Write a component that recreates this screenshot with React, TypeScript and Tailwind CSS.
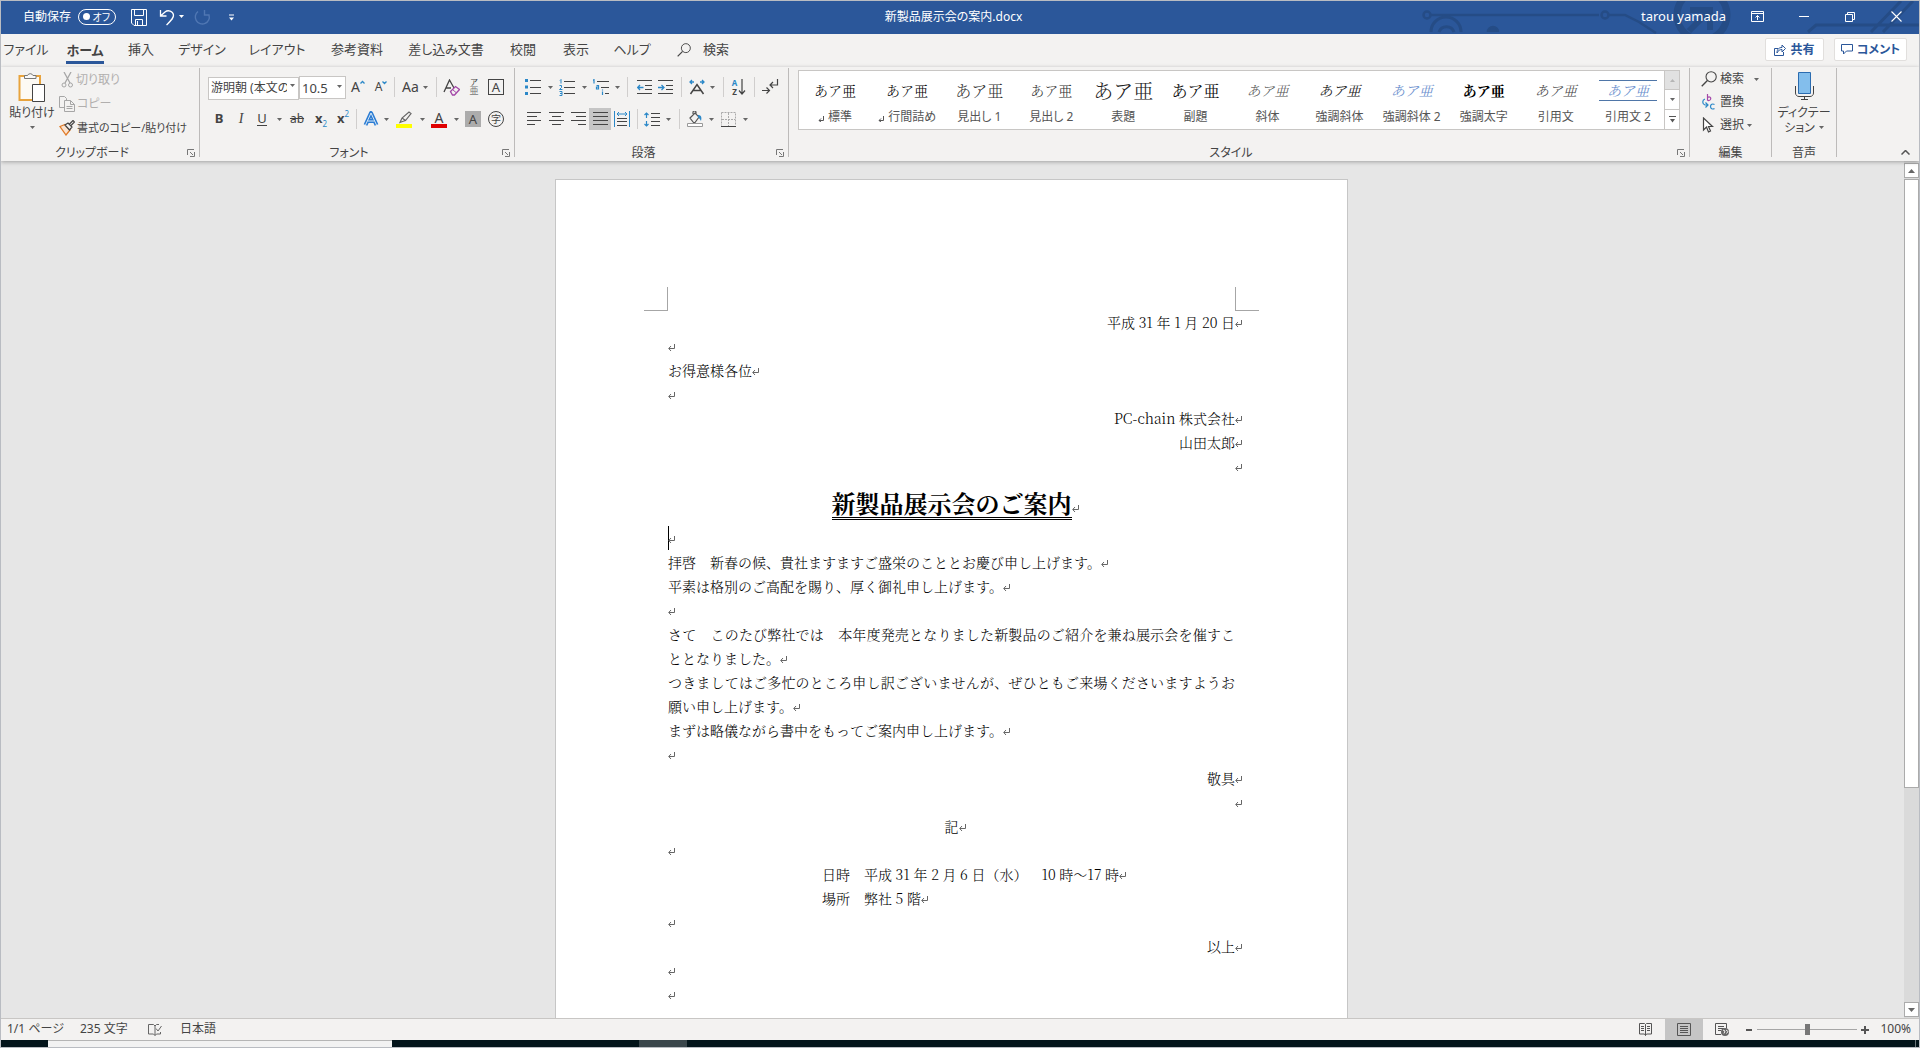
import React from "react";

const INK = "#444444";
const BLUE = "#2b88c8";

type Kids = { children?: React.ReactNode };

function Svg({ w, h, children, className = "" }: { w: number; h: number; className?: string } & Kids) {
  return (
    <svg width={w} height={h} viewBox={`0 0 ${w} ${h}`} fill="none" className={`shrink-0 ${className}`} aria-hidden="true">
      {children}
    </svg>
  );
}

function Tri({ color = "#666666" }: { color?: string }) {
  return (
    <Svg w={5} h={3}>
      <path d="M0 0h5L2.500 3z" fill={color} />
    </Svg>
  );
}

function Tool({ w, label, on = false, children }: { w: string; label: string; on?: boolean } & Kids) {
  return (
    <button
      type="button"
      aria-label={label}
      title={label}
      className={`flex h-[22px] shrink-0 items-center justify-center ${w} ${on ? "bg-[#c5c5c5]" : ""}`}
    >
      {children}
    </button>
  );
}

function Caret({ w, label }: { w: string; label: string }) {
  return (
    <button type="button" aria-label={label} className={`flex h-[22px] shrink-0 items-center justify-center ${w}`}>
      <Tri />
    </button>
  );
}

function Sep({ w }: { w: string }) {
  return (
    <div className={`flex shrink-0 justify-center ${w}`}>
      <div className="h-5 w-px bg-[#d0cecd]" />
    </div>
  );
}

function Group({ label, w, launcher = true, children }: { label: string; w: string; launcher?: boolean } & Kids) {
  return (
    <section aria-label={label} className={`flex flex-col ${w}`}>
      <div className="h-[78px]">{children}</div>
      <div className="flex h-4 items-center">
        <h2 className={`flex-1 text-center text-xs leading-4 text-[#444444] ${launcher ? "pr-1" : ""}`}>{label}</h2>
        {launcher && (
          <button type="button" aria-label={`${label}の設定`} className="flex w-3 justify-start">
            <Svg w={8} h={8}>
              <path d="M.5 6V.5H7M3 3l3 3M7.500 3v4.500H3" stroke="#777777" />
            </Svg>
          </button>
        )}
      </div>
    </section>
  );
}

function Divider() {
  return <div className="mt-px h-[89px] w-px shrink-0 bg-[#bdbbba]" />;
}

/* ---------- title bar ---------- */

function Circuit() {
  return (
    <svg
      className="pointer-events-none absolute right-0 top-0"
      width={498}
      height={33}
      viewBox="0 0 498 33"
      fill="none"
      stroke="#254c86"
      strokeWidth={2.500}
      aria-hidden="true"
    >
      <circle cx="6" cy="14" r="3.500" />
      <path d="M10 14h168" />
      <circle cx="184" cy="14" r="3.500" />
      <path d="M188 14h16l14 7 17 11" />
      <path d="M10 31a15 15 0 0 1 30 0M18 31a8 8 0 0 1 15 0" strokeWidth="3" />
      <path d="M67 31a5 5 0 0 1 10 0" fill="#254c86" />
      <circle cx="281" cy="14" r="25" strokeWidth="7" />
      <path d="M268 30l18-18M269 9h20v20" strokeWidth="6" />
      <path d="M387 31l8-7h103M450 31L480 0M462 31L492 0" strokeWidth="3" />
    </svg>
  );
}

function TitleBar() {
  return (
    <header className="relative grid h-[33px] shrink-0 grid-cols-[1fr_auto_1fr] items-center overflow-hidden bg-[#2b579a] pb-0.5 text-white">
      <Circuit />
      <div className="relative flex items-center pl-[22px]">
        <span className="mr-[7px] text-xs">自動保存</span>
        <button
          type="button"
          role="switch"
          aria-checked="false"
          aria-label="自動保存"
          className="flex h-4 w-[38px] items-center justify-between rounded-full border border-white pl-1 pr-[5px]"
        >
          <span className="size-[7px] rounded-full bg-white" />
          <span className="text-[10px] leading-3">オフ</span>
        </button>
        <button type="button" aria-label="上書き保存" className="ml-[15px] mt-0.5">
          <Svg w={16} h={17}>
            <path d="M.5 .5h15v16H3L.500 14zM3.500 .5v6h9v-6M4.500 16.500v-6h7v6M6.500 12v4" stroke="white" />
          </Svg>
        </button>
        <button type="button" aria-label="元に戻す" className="ml-3 mt-0.5">
          <Svg w={16} h={17}>
            <path d="M1.500 1v6h6M1.500 7L6 3c3-2.500 8-1 8.500 3 .2 3-2 5-7 10" stroke="white" strokeWidth="1.300" />
          </Svg>
        </button>
        <button type="button" aria-label="元に戻すの履歴" className="ml-1 flex h-4 items-center">
          <Tri color="white" />
        </button>
        <button type="button" aria-label="やり直し" disabled className="ml-[10px] mt-0.5">
          <Svg w={17} h={17}>
            <path d="M10.500 1v5h5M15 6A7 7 0 1 1 4 2.500" stroke="#5077b3" strokeWidth="1.400" />
          </Svg>
        </button>
        <button type="button" aria-label="クイック アクセス ツール バーのユーザー設定" className="ml-[17px] mt-0.5">
          <Svg w={7} h={7}>
            <path d="M1 1h5" stroke="white" />
            <path d="M1 3.500h5L3.500 6.500z" fill="white" />
          </Svg>
        </button>
      </div>
      <h1 className="relative mr-[13px] text-xs">新製品展示会の案内.docx</h1>
      <div className="relative flex items-center justify-end">
        <span className="mr-2 text-[13px]">tarou yamada</span>
        <button type="button" aria-label="リボンの表示オプション" className="flex h-[31px] w-[47px] items-center justify-center">
          <Svg w={13} h={11}>
            <path d="M.5 .5h12v10H.5zM.5 2.500h12M6.500 9V4.500M4.500 6.500l2-2 2 2" stroke="white" />
          </Svg>
        </button>
        <button type="button" aria-label="最小化" className="flex h-[31px] w-[46px] items-center justify-center">
          <Svg w={10} h={1}>
            <path d="M0 .5h10" stroke="white" />
          </Svg>
        </button>
        <button type="button" aria-label="元に戻す (縮小)" className="flex h-[31px] w-[46px] items-center justify-center">
          <Svg w={10} h={10}>
            <path d="M.5 2.500h7v7h-7zM2.500 2.500v-2h7v7h-2" stroke="white" />
          </Svg>
        </button>
        <button type="button" aria-label="閉じる" className="flex h-[31px] w-[46px] items-center justify-center">
          <Svg w={11} h={11}>
            <path d="M.5 .5l10 10M10.500 .5l-10 10" stroke="white" strokeWidth="1.100" />
          </Svg>
        </button>
      </div>
    </header>
  );
}

/* ---------- tabs ---------- */

const TABS = [
  { name: "ファイル", w: "w-[50px]" },
  { name: "ホーム", w: "w-[68px]", on: true },
  { name: "挿入", w: "w-11" },
  { name: "デザイン", w: "w-[78px]" },
  { name: "レイアウト", w: "w-[72px]" },
  { name: "参考資料", w: "w-[88px]" },
  { name: "差し込み文書", w: "w-[90px]" },
  { name: "校閲", w: "w-16" },
  { name: "表示", w: "w-[42px]" },
  { name: "ヘルプ", w: "w-[70px]" },
];

function Magnifier({ size }: { size: number }) {
  return (
    <svg width={size} height={size} viewBox="0 0 15 15" fill="none" className="shrink-0" aria-hidden="true">
      <circle cx="9.500" cy="5.500" r="4.800" stroke={INK} />
      <path d="M6 9L.700 14.300" stroke={INK} strokeWidth="1.300" />
    </svg>
  );
}

function TabRow() {
  return (
    <nav aria-label="リボン タブ" className="flex h-[33px] shrink-0 items-center pb-0.5 text-[13px] text-[#444444]">
      {TABS.map((t) => (
        <button key={t.name} type="button" className={`flex shrink-0 justify-center whitespace-nowrap ${t.w}`}>
          {t.on ? (
            <span className="mt-1 border-b-3 border-[#2b579a] pb-px font-bold leading-5">{t.name}</span>
          ) : (
            t.name
          )}
        </button>
      ))}
      <button type="button" className="ml-[10px] flex items-center gap-3 whitespace-nowrap">
        <Magnifier size={14} />
        検索
      </button>
      <div className="ml-auto flex gap-[10px] pr-3 font-bold text-[#2b579a]">
        <button type="button" className="flex h-[23px] w-[59px] items-center justify-center gap-1 rounded-xs border border-[#e1dfdd] bg-white text-xs">
          <Svg w={12} h={12}>
            <path d="M4 4.500H.5v7h9V8M3 9c0-4 2-5.500 5-5.500V1l3.500 3.500L8 8V5.500C6 5.500 4 6.500 3 9z" stroke="#2b579a" />
          </Svg>
          共有
        </button>
        <button type="button" className="flex h-[23px] w-[73px] items-center justify-center gap-1 rounded-xs border border-[#e1dfdd] bg-white text-xs">
          <Svg w={12} h={11}>
            <path d="M.5 .5h11v6.500H5.500L2.500 10V7h-2z" stroke="#2b579a" />
          </Svg>
          コメント
        </button>
      </div>
    </nav>
  );
}

/* ---------- ribbon ---------- */

function Clipboard() {
  return (
    <Group label="クリップボード" w="w-[198px]">
      <div className="flex pt-[5px] text-xs leading-4 text-[#444444]">
        <button type="button" className="flex w-[62px] shrink-0 flex-col items-center">
          <Svg w={28} h={30}>
            <path d="M4 4h18v24H1.500V4z" fill="#fdfaf4" stroke="#e8a33d" strokeWidth="2" />
            <path d="M6.500 6.500v-3h3a3 3 0 0 1 5.500 0h3v3z" fill="#f8f8f8" stroke="#777777" />
            <path d="M14.500 12.500h12v17h-12z" fill="white" stroke="#444444" />
          </Svg>
          <span className="mt-[3px] whitespace-nowrap">貼り付け</span>
          <span className="mt-[5px]">
            <Tri />
          </span>
        </button>
        <div className="flex flex-col gap-2 whitespace-nowrap">
          <button type="button" disabled className="-ml-1 flex h-4 items-center gap-[3px] text-[#b1afae]">
            <Svg w={14} h={16}>
              <path d="M5 0l6 11M12 0L6 11" stroke="#a6a6a6" strokeWidth="1.300" />
              <circle cx="5" cy="13" r="2" stroke="#a6a6a6" />
              <circle cx="11.500" cy="13" r="2" stroke="#a6a6a6" />
            </Svg>
            切り取り
          </button>
          <button type="button" disabled className="-ml-1 flex h-4 items-center gap-[2px] text-[#b1afae]">
            <Svg w={16} h={16}>
              <path d="M.5 .5h5l2 2v9h-7z" stroke="#a6a6a6" />
              <path d="M5.500 4.500h6l4 4v7h-10z" fill="#f3f2f1" stroke="#a6a6a6" />
              <path d="M11.500 4.500v4h4M7.500 10.500h6M7.500 12.500h6" stroke="#a6a6a6" />
            </Svg>
            コピー
          </button>
          <button type="button" className="-ml-1 flex h-4 items-center gap-[2px] text-[11px]">
            <Svg w={16} h={16}>
              <path d="M1 6.500l5-2 5 5.500-4 5z" fill="#fbe3cf" stroke="#e07b28" strokeWidth="1.300" />
              <path d="M6 5l3-2 4 4-2.500 3zM10.500 4l3.500-3.500 1.500 1.500L12 5.500" fill="#f3f2f1" stroke="#444444" strokeWidth="1.200" />
            </Svg>
            書式のコピー/貼り付け
          </button>
        </div>
      </div>
    </Group>
  );
}

function FontPicker({ label, value, w, look }: { label: string; value: string; w: string; look: string }) {
  return (
    <div className={`relative shrink-0 ${w}`}>
      <select
        aria-label={label}
        defaultValue={value}
        className={`h-[23px] w-full appearance-none overflow-hidden border border-[#c8c6c4] bg-white pl-[2px] leading-5 text-[#444444] ${look}`}
      >
        <option>{value}</option>
      </select>
      <span className="pointer-events-none absolute right-1 top-[10px]">
        <Tri />
      </span>
    </div>
  );
}

function FontGroup() {
  return (
    <Group label="フォント" w="w-[314px]">
      <div className="pl-2 pt-1 text-[#444444]">
        <div className="flex h-8 items-center">
          <FontPicker label="フォント" value="游明朝 (本文の" w="w-[91px]" look="pr-[11px] text-xs" />
          <FontPicker label="フォント サイズ" value="10.5" w="w-[47px]" look="pr-[11px] text-[13px]" />
          <Tool w="w-6" label="フォント サイズの拡大">
            <span className="text-sm">A</span>
            <Svg w={5} h={14}>
              <path d="M.5 3.500l2-2 2 2" stroke={BLUE} strokeWidth="1.300" />
            </Svg>
          </Tool>
          <Tool w="w-[22px]" label="フォント サイズの縮小">
            <span className="text-xs">A</span>
            <Svg w={5} h={14}>
              <path d="M.5 1.500l2 2 2-2" stroke={BLUE} strokeWidth="1.300" />
            </Svg>
          </Tool>
          <Sep w="w-1" />
          <Tool w="w-[38px]" label="文字種の変換">
            <span className="mr-1 text-sm">Aa</span>
            <Tri />
          </Tool>
          <Sep w="w-1" />
          <Tool w="w-[26px]" label="すべての書式をクリア">
            <Svg w={17} h={17}>
              <path d="M1 13L6.500 1 11 9M3 9h5" stroke={INK} strokeWidth="1.300" />
              <path d="M7.500 12.500l5-5 4 3-5 5.500h-2z" fill="#f3f2f1" stroke="#a347a8" strokeWidth="1.300" />
              <path d="M9.500 10.500l3.500 3" stroke="#a347a8" />
            </Svg>
          </Tool>
          <Tool w="w-5" label="ルビ">
            <span className="flex flex-col items-center">
              <span className="text-[8px] leading-[8px]">ア</span>
              <span className="text-[9px] leading-[10px] text-[#777777]">亜</span>
            </span>
          </Tool>
          <Tool w="w-6" label="囲み線">
            <span className="flex size-4 items-center justify-center border border-[#444444] text-[13px] leading-4">A</span>
          </Tool>
        </div>
        <div className="flex h-8 items-center">
          <Tool w="w-[22px]" label="太字">
            <span className="text-[13px] font-bold">B</span>
          </Tool>
          <Tool w="w-[22px]" label="斜体">
            <span className="font-['Liberation_Serif'] text-sm italic">I</span>
          </Tool>
          <Tool w="w-5" label="下線">
            <span className="border-b border-[#444444] text-[13px] leading-[13px]">U</span>
          </Tool>
          <Caret w="w-[14px]" label="下線の種類" />
          <Tool w="w-[22px]" label="取り消し線">
            <span className="text-xs line-through">ab</span>
          </Tool>
          <Tool w="w-[26px]" label="下付き">
            <span className="text-[13px] font-bold">x</span>
            <span className="mt-[10px] text-[8px] leading-[8px] text-[#2b88c8]">2</span>
          </Tool>
          <Tool w="w-[18px]" label="上付き">
            <span className="text-[13px] font-bold">x</span>
            <span className="mb-[10px] text-[8px] leading-[8px] text-[#2b88c8]">2</span>
          </Tool>
          <Sep w="w-2" />
          <Tool w="w-[22px]" label="文字の効果と体裁">
            <Svg w={16} h={16}>
              <path d="M2.500 14L8 2l5.500 12M4.500 10h7" stroke="#2b7cd3" strokeWidth="4" strokeLinejoin="round" />
              <path d="M2.500 14L8 2l5.500 12M4.500 10h7" stroke="#d6e8f7" strokeWidth="1" />
            </Svg>
          </Tool>
          <Caret w="w-2" label="文字の効果" />
          <Tool w="w-7" label="蛍光ペンの色">
            <Svg w={16} h={17}>
              <path d="M0 13h16v4H0z" fill="#ffff00" />
              <path d="M4 11.500l2-4.500 7-6 2 1.500-5.500 7-3 1zM6 7l3.500 2.500" stroke="#666666" strokeWidth="1.200" />
            </Svg>
          </Tool>
          <Caret w="w-2" label="蛍光ペンの色の一覧" />
          <Tool w="w-[26px]" label="フォントの色">
            <span className="flex flex-col items-center">
              <span className="text-sm leading-[13px]">A</span>
              <span className="h-1 w-4 bg-[#e00000]" />
            </span>
          </Tool>
          <Caret w="w-2" label="フォントの色の一覧" />
          <Tool w="w-[26px]" label="文字の網かけ">
            <span className="flex size-4 items-center justify-center bg-[#acacac] text-[13px] leading-4">A</span>
          </Tool>
          <Tool w="w-5" label="囲い文字">
            <span className="flex size-4 items-center justify-center rounded-full border border-[#444444] text-[10px] leading-3">字</span>
          </Tool>
        </div>
      </div>
    </Group>
  );
}

function Lines({ d }: { d: string }) {
  return (
    <Svg w={15} h={14}>
      <path d={d} stroke={INK} />
    </Svg>
  );
}

function ParagraphGroup() {
  return (
    <Group label="段落" w="w-[273px]">
      <div className="pt-1">
        <div className="flex h-8 items-center pl-[6px]">
          <Tool w="w-6" label="箇条書き">
            <Svg w={16} h={16}>
              <path d="M0 0h3v3H0zM0 6.500h3v3H0zM0 13h3v3H0z" fill={BLUE} />
              <path d="M5 1.500h11M5 8.500h11M5 14.500h11" stroke={INK} />
            </Svg>
          </Tool>
          <Caret w="w-[10px]" label="箇条書きの種類" />
          <Tool w="w-6" label="段落番号">
            <Svg w={16} h={17}>
              <path d="M1 1.500l1-1v4M.5 6.500h2v2l-2 2h3M.5 12.500h2.500v4H.500M1 14.500h2" stroke={BLUE} />
              <path d="M5 2.500h11M5 8.500h11M5 14.500h11" stroke={INK} />
            </Svg>
          </Tool>
          <Caret w="w-[10px]" label="段落番号の種類" />
          <Tool w="w-6" label="アウトライン">
            <Svg w={16} h={17}>
              <path d="M0 1.500l1-1v4M3.500 6.500h2v3.500h-2v-2h2M9.500 12.500V16M9.500 10.500v1" stroke={BLUE} strokeWidth="1.200" />
              <path d="M4 2.500h12M8 8.500h8M12 14.500h4" stroke={INK} />
            </Svg>
          </Tool>
          <Caret w="w-2" label="アウトラインの種類" />
          <Sep w="w-[13px]" />
          <Tool w="w-5" label="インデントを減らす">
            <Svg w={15} h={14}>
              <path d="M0 .5h15M8 5.500h7M8 9.500h7M0 13.500h15" stroke={INK} />
              <path d="M6.500 7.500H1M3 5L.700 7.500 3 10" stroke={BLUE} strokeWidth="1.300" />
            </Svg>
          </Tool>
          <Tool w="w-[23px]" label="インデントを増やす">
            <Svg w={15} h={14}>
              <path d="M0 .5h15M8 5.500h7M8 9.500h7M0 13.500h15" stroke={INK} />
              <path d="M0 7.500h5.500M3.500 5l2.500 2.500L3.500 10" stroke={BLUE} strokeWidth="1.300" />
            </Svg>
          </Tool>
          <Sep w="w-2" />
          <Tool w="w-6" label="拡張書式">
            <Svg w={16} h={16}>
              <path d="M1.500 15L8 5.500 14.500 15M4 11.500h8" stroke={INK} strokeWidth="1.500" />
              <path d="M5 3H1M3 1L1 3l2 2M11 3h4M13 1l2 2-2 2" stroke={BLUE} strokeWidth="1.300" />
            </Svg>
          </Tool>
          <Caret w="w-[6px]" label="拡張書式の一覧" />
          <Sep w="w-4" />
          <Tool w="w-4" label="並べ替え">
            <span className="flex flex-col text-[8px] font-bold leading-[9px]">
              <span className="text-[#2b88c8]">A</span>
              <span className="text-[#444444]">Z</span>
            </span>
            <Svg w={8} h={16} className="ml-px">
              <path d="M4 0v15M1 11.500l3 3.500 3-3.500" stroke={INK} strokeWidth="1.200" />
            </Svg>
          </Tool>
          <Sep w="w-[14px]" />
          <Tool w="w-[18px]" label="編集記号の表示/非表示">
            <Svg w={17} h={16}>
              <path d="M15.500 0v6H8M11 3L8 6l3 3M0 11.500h7M4.500 8.500l3 3-3 3" stroke={INK} strokeWidth="1.200" />
            </Svg>
          </Tool>
        </div>
        <div className="flex h-8 items-center pl-2">
          <Tool w="w-[22px]" label="左揃え">
            <Lines d="M0 .5h14M0 4.500h10M0 8.500h14M0 12.500h8" />
          </Tool>
          <Tool w="w-[22px]" label="中央揃え">
            <Lines d="M0 .5h15M3 4.500h9M0 8.500h15M3 12.500h9" />
          </Tool>
          <Tool w="w-[22px]" label="右揃え">
            <Lines d="M0 .5h15M5 4.500h10M0 8.500h15M7 12.500h8" />
          </Tool>
          <Tool w="w-[22px]" label="両端揃え" on>
            <Lines d="M0 .5h15M0 4.500h15M0 8.500h15M0 12.500h15" />
          </Tool>
          <Tool w="w-[22px]" label="均等割り付け">
            <Svg w={16} h={16}>
              <path d="M.5 0v16M15.500 0v16M3 3h10M5 1L3 3l2 2M11 1l2 2-2 2" stroke={BLUE} />
              <path d="M3 7.500h10M3 10.500h10M3 14.500h10" stroke={INK} />
            </Svg>
          </Tool>
          <Sep w="w-2" />
          <Tool w="w-[22px]" label="行と段落の間隔">
            <Svg w={16} h={15}>
              <path d="M2.500 1v5M.500 3l2-2 2 2M2.500 9v5M.500 12l2 2 2-2" stroke={BLUE} strokeWidth="1.200" />
              <path d="M7 1.500h9M7 5.500h9M7 9.500h9M7 13.500h9" stroke={INK} />
            </Svg>
          </Tool>
          <Caret w="w-[10px]" label="間隔の一覧" />
          <Sep w="w-3" />
          <Tool w="w-5" label="塗りつぶし">
            <Svg w={16} h={16}>
              <path d="M3 7l5-5 4 4-4 5.500H6.500zM6 3V1.500a1.500 1.500 0 0 1 3 0V4" stroke="#555555" strokeWidth="1.200" />
              <path d="M11 4c3 0 4 2 3 6-1-2-2-3-3-4z" fill={BLUE} />
              <path d="M.5 12.500h15v3H.5z" fill="white" stroke="#999999" />
            </Svg>
          </Tool>
          <Caret w="w-3" label="塗りつぶしの色" />
          <Tool w="w-[22px]" label="罫線">
            <Svg w={15} h={15}>
              <path d="M.5 .5h14v13M.5 .5v13M7.500 1v13M1 7.500h13" stroke="#aaaaaa" strokeDasharray="2 1" />
              <path d="M0 14.500h15" stroke={INK} />
            </Svg>
          </Tool>
          <Caret w="w-3" label="罫線の種類" />
        </div>
      </div>
    </Group>
  );
}

const STYLES = [
  { name: "標準", mark: true, look: "font-light text-sm text-black" },
  { name: "行間詰め", mark: true, look: "font-light text-sm text-black" },
  { name: "見出し 1", look: "font-light text-base text-[#333333]" },
  { name: "見出し 2", look: "font-light text-sm text-[#333333]" },
  { name: "表題", look: "font-light text-xl text-[#222222]" },
  { name: "副題", look: "font-normal text-base text-[#111111]" },
  { name: "斜体", look: "font-light text-sm italic text-[#555555]" },
  { name: "強調斜体", look: "font-normal text-sm italic text-[#222222]" },
  { name: "強調斜体 2", look: "font-normal text-sm italic text-[#6f93cf]" },
  { name: "強調太字", look: "font-bold text-sm text-black" },
  { name: "引用文", look: "font-light text-sm italic text-[#444444]" },
  { name: "引用文 2", look: "border-y border-[#4f76a8] px-2 font-normal text-sm italic text-[#6f93cf]" },
];

function StyleGroup() {
  return (
    <Group label="スタイル" w="min-w-0 flex-1">
      <div className="px-[9px] pt-[3px]">
        <div className="flex h-[60px] border border-[#c8c6c4] bg-white">
          <div className="grid min-w-0 flex-1 grid-cols-12">
            {STYLES.map((s) => (
              <button key={s.name} type="button" className="flex min-w-0 flex-col items-center overflow-hidden whitespace-nowrap">
                <span className="flex h-[38px] items-center">
                  <span className={`font-[Noto_Serif_CJK_JP,Noto_Sans_CJK_JP,serif] leading-[19px] [font-feature-settings:normal] ${s.look}`}>
                    あア亜
                  </span>
                </span>
                <span className="flex items-center gap-1 text-xs leading-4 text-[#555555]">
                  {s.mark && (
                    <Svg w={6} h={6} className="mt-1">
                      <path d="M5.500 0v4.500H1M3 2.500l-2 2 2 1.500" stroke="#555555" />
                    </Svg>
                  )}
                  {s.name}
                </span>
              </button>
            ))}
          </div>
          <div className="grid w-[15px] grid-rows-3 divide-y divide-[#c8c6c4] border-l border-[#c8c6c4]">
            <button type="button" aria-label="前の行" disabled className="flex items-center justify-center bg-[#e1e1e1]">
              <Svg w={5} h={3}>
                <path d="M0 3h5L2.500 0z" fill="#b5b5b5" />
              </Svg>
            </button>
            <button type="button" aria-label="次の行" className="flex items-center justify-center">
              <Tri />
            </button>
            <button type="button" aria-label="その他" className="flex items-center justify-center">
              <Svg w={7} h={7}>
                <path d="M0 .5h7" stroke="#555555" />
                <path d="M1 3h5L3.500 6.500z" fill="#555555" />
              </Svg>
            </button>
          </div>
        </div>
      </div>
    </Group>
  );
}

function EditGroup() {
  return (
    <Group label="編集" w="w-[81px]" launcher={false}>
      <div className="flex flex-col gap-[7px] pl-[11px] pt-1 text-xs leading-4 text-[#444444]">
        <button type="button" className="flex h-4 items-center gap-[3px]">
          <Magnifier size={16} />
          検索
          <span className="ml-[7px]">
            <Tri />
          </span>
        </button>
        <button type="button" className="flex h-4 items-center gap-[3px]">
          <Svg w={16} h={16}>
            <path d="M6.500 0v6.500M6.500 3.500c2-1.500 4 0 3 2-.7 1-2 1.500-3 .5" stroke="#a347a8" strokeWidth="1.200" />
            <path d="M13.500 10.500c-2-1.200-4 0-4 2s2 3.200 4 2M4 5c-3 1-3 5 0 6h2.500M4.500 8.500l2.500 2.500-2.500 2.500" stroke={BLUE} strokeWidth="1.200" />
          </Svg>
          置換
        </button>
        <button type="button" className="flex h-4 items-center gap-[3px]">
          <Svg w={16} h={16}>
            <path d="M2.500 1v12l3-3 2 5 2-1-2-4.500h4z" fill="white" stroke={INK} strokeWidth="1.200" />
          </Svg>
          選択
          <Tri />
        </button>
      </div>
    </Group>
  );
}

function VoiceGroup() {
  return (
    <Group label="音声" w="w-16" launcher={false}>
      <button type="button" className="flex w-full flex-col items-center pt-[5px] text-xs leading-[15px] text-[#444444]">
        <Svg w={19} h={29}>
          <path d="M3.500 .5h12v21h-12z" fill="#83beec" stroke="#2b6cb0" />
          <path d="M.5 14v7c0 2 1.500 3.500 3.500 3.500h11c2 0 3.500-1.500 3.500-3.500v-7M9.500 24.500v3M6 27.500h7" stroke={INK} />
        </Svg>
        <span className="mt-1 whitespace-nowrap">ディクテー</span>
        <span className="flex items-center gap-1">
          ション
          <Tri />
        </span>
      </button>
    </Group>
  );
}

function Ribbon() {
  return (
    <div className="relative z-10 flex h-[94px] shrink-0 shadow-[0_1px_4px_rgba(0,0,0,0.3)]">
      <Clipboard />
      <Divider />
      <FontGroup />
      <Divider />
      <ParagraphGroup />
      <Divider />
      <StyleGroup />
      <Divider />
      <EditGroup />
      <Divider />
      <VoiceGroup />
      <Divider />
      <div className="flex w-[82px] items-end justify-end pb-[6px] pr-[9px]">
        <button type="button" aria-label="リボンを折りたたむ">
          <Svg w={9} h={5}>
            <path d="M.5 4.500l4-4 4 4" stroke="#555555" strokeWidth="1.500" />
          </Svg>
        </button>
      </div>
    </div>
  );
}

/* ---------- document ---------- */

function Mark() {
  return (
    <span className="inline-block w-0 overflow-visible whitespace-nowrap align-baseline">
      <svg width={8} height={8} viewBox="0 0 8 8" fill="none" className="inline-block max-w-none align-baseline" aria-hidden="true">
        <path d="M6.500 0v4.500H1M3 2L.700 4.500 3 7" stroke="#666666" />
      </svg>
    </span>
  );
}

function P({ children, className = "" }: { className?: string } & Kids) {
  return (
    <p className={`min-h-6 ${className}`}>
      {children}
      <Mark />
    </p>
  );
}

function Page() {
  return (
    <article className="mx-auto mt-[18px] min-h-[1122px] w-[793px] max-w-full border border-[#c6c6c6] bg-white px-[88px] pt-[107px]">
      <div className="flex justify-between">
        <div className="size-6 border-b border-r border-[#a6a6a6]" />
        <div className="size-6 border-b border-l border-[#a6a6a6]" />
      </div>
      <div className="mx-6 -mt-px font-[Noto_Serif_CJK_JP,Liberation_Serif,Noto_Sans_CJK_JP,serif] text-sm font-light leading-6 text-black [font-feature-settings:normal] [text-spacing-trim:space-all]">
        <P className="text-right">平成 31 年 1 月 20 日</P>
        <P />
        <P>お得意様各位</P>
        <P />
        <P className="text-right">PC-chain 株式会社</P>
        <P className="text-right">山田太郎</P>
        <P className="text-right" />
        <h2 className="flex h-12 items-baseline justify-center pt-[10px] text-2xl font-bold leading-[29px]">
          <span className="border-b-3 border-double border-black text-black">新製品展示会のご案内</span>
          <Mark />
        </h2>
        <div className="flex h-6">
          <span className="-mr-px h-6 w-px bg-black" />
          <P />
        </div>
        <P>拝啓　新春の候、貴社ますますご盛栄のこととお慶び申し上げます。</P>
        <P>平素は格別のご高配を賜り、厚く御礼申し上げます。</P>
        <P />
        <P className="text-justify">
          さて　このたび弊社では　本年度発売となりました新製品のご紹介を兼ね展示会を催すこととなりました。
        </P>
        <P className="text-justify">
          つきましてはご多忙のところ申し訳ございませんが、ぜひともご来場くださいますようお願い申し上げます。
        </P>
        <P>まずは略儀ながら書中をもってご案内申し上げます。</P>
        <P />
        <P className="text-right">敬具</P>
        <P className="text-right" />
        <P className="text-center">記</P>
        <P />
        <P className="pl-[154px]">日時　平成 31 年 2 月 6 日（水）　10 時～17 時</P>
        <P className="pl-[154px]">場所　弊社 5 階</P>
        <P />
        <P className="text-right">以上</P>
        <P />
        <P />
      </div>
    </article>
  );
}

function Workspace() {
  return (
    <main className="flex min-h-0 flex-1 bg-[#e6e6e6]">
      <div className="min-w-0 flex-1 overflow-hidden pr-0.5">
        <Page />
      </div>
      <div className="flex w-[15px] shrink-0 flex-col bg-[#dadada] pb-px pt-[2px]">
        <button type="button" aria-label="上へスクロール" className="flex h-[15px] shrink-0 items-center justify-center border border-[#ababab] bg-white">
          <Svg w={7} h={4}>
            <path d="M0 4h7L3.500 0z" fill="#666666" />
          </Svg>
        </button>
        <div className="mt-px flex-[607] border border-[#ababab] bg-white" />
        <div className="flex-[214]" />
        <button type="button" aria-label="下へスクロール" className="flex h-[15px] shrink-0 items-center justify-center border border-[#ababab] bg-white">
          <Svg w={7} h={4}>
            <path d="M0 0h7L3.500 4z" fill="#666666" />
          </Svg>
        </button>
      </div>
    </main>
  );
}

/* ---------- status bar ---------- */

function StatusBar() {
  return (
    <footer className="flex h-[22px] shrink-0 items-center border-t border-[#c8c6c4] text-xs leading-5 text-[#444444]">
      <span className="ml-[6px] w-[73px] whitespace-nowrap pb-px">1/1 ページ</span>
      <span className="w-[68px] whitespace-nowrap pb-px">235 文字</span>
      <button type="button" aria-label="文章校正" className="w-8">
        <Svg w={14} h={12}>
          <path d="M7 11.500V2L5.500 .5H.5v9.500h5L7 11.500l1.500-1.500h4V8M7 2L8.500 .5H11M8 4.500l2 2.500 3.500-5" stroke="#666666" />
        </Svg>
      </button>
      <span className="pb-px">日本語</span>
      <div className="ml-auto flex h-full items-center">
        <button type="button" aria-label="閲覧モード" className="flex h-full w-[38px] items-center justify-center">
          <Svg w={14} h={13}>
            <path d="M6.500 12.500V1.500L5.500 .5H.5v10.500h5zM6.500 1.500l1-1h5v10.500h-5l-1 1.500M2 3.500h3M2 5.500h3M2 7.500h3M8 3.500h3M8 5.500h3M8 7.500h3" stroke="#555555" />
          </Svg>
        </button>
        <button type="button" aria-label="印刷レイアウト" aria-pressed="true" className="flex h-full w-[38px] items-center justify-center bg-[#c5c5c5]">
          <Svg w={14} h={13}>
            <path d="M.5 .5h13v12H.5zM3 3.500h8M3 5.500h8M3 7.500h8M3 9.500h8" stroke="#555555" />
          </Svg>
        </button>
        <button type="button" aria-label="Web レイアウト" className="flex h-full w-[38px] items-center justify-center">
          <Svg w={14} h={13}>
            <path d="M6 11.500H.5V.5h11v5M3 3.500h6M3 5.500h6M3 7.500h3" stroke="#555555" />
            <circle cx="10" cy="9" r="4" fill="#666666" />
            <path d="M8 7l2 1-1 2.500M11 7l2 1.500-1.500 2" stroke="#f3f2f1" />
          </Svg>
        </button>
        <button type="button" aria-label="縮小" className="flex w-4 items-center justify-center">
          <Svg w={6} h={2}>
            <path d="M0 1h6" stroke="#555555" strokeWidth="2" />
          </Svg>
        </button>
        <input
          type="range"
          aria-label="ズーム"
          min={10}
          max={190}
          defaultValue={100}
          className="h-[11px] w-[100px] appearance-none bg-[linear-gradient(#a6a6a6,#a6a6a6)] bg-[length:100%_1px] bg-center bg-no-repeat [&::-webkit-slider-thumb]:h-[11px] [&::-webkit-slider-thumb]:w-[5px] [&::-webkit-slider-thumb]:appearance-none [&::-webkit-slider-thumb]:bg-[#777777]"
        />
        <button type="button" aria-label="拡大" className="flex w-4 items-center justify-center">
          <Svg w={8} h={8}>
            <path d="M0 4h8M4 0v8" stroke="#555555" strokeWidth="2" />
          </Svg>
        </button>
        <span className="w-[46px] pb-px pr-2 text-right">100%</span>
      </div>
    </footer>
  );
}

function TaskbarEdge() {
  return (
    <div className="flex h-[7px] shrink-0 bg-[#03141a]">
      <div className="ml-[47px] w-[344px] border-t border-[#b5b5b5] bg-[#f2f2f2]" />
      <div className="ml-[247px] w-12 bg-[#3a464b]" />
      <div className="ml-auto mr-[3px] w-px bg-[#6b767a]" />
    </div>
  );
}

export default function App() {
  return (
    <div
      lang="ja"
      className="flex h-screen flex-col overflow-hidden border border-[#b9bcc2] bg-[#f3f2f1] font-[Noto_Sans,Noto_Sans_CJK_JP,sans-serif] [font-feature-settings:'palt']"
    >
      <TitleBar />
      <TabRow />
      <Ribbon />
      <Workspace />
      <StatusBar />
      <TaskbarEdge />
    </div>
  );
}
